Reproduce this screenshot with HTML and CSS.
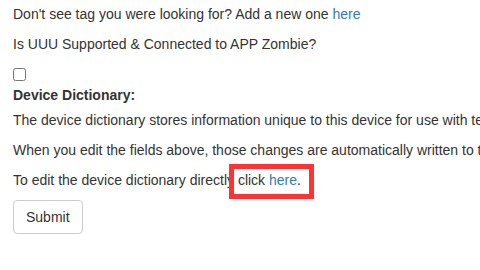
FILE: index.html
```html
<!DOCTYPE html>
<html>
<head>
<meta charset="utf-8">
<link rel="stylesheet" href="styles.css">
</head>
<body>
<div class="page">
  <p>Don't see tag you were looking for? Add a new one <a href="#">here</a></p>
  <p>Is UUU Supported &amp; Connected to APP Zombie?</p>
  <div class="check-row"><input type="checkbox" class="check"></div>
  <label class="label">Device Dictionary:</label>
  <p>The device dictionary stores information unique to this device for use with templates and other automation.</p>
  <p>When you edit the fields above, those changes are automatically written to the device dictionary.</p>
  <p>To edit the device dictionary directly <span class="highlight">click <a href="#">here</a>.</span></p>
  <button class="btn">Submit</button>
</div>
</body>
</html>
```

FILE: styles.css
```css
html, body {
  margin: 0;
  padding: 0;
  background: #fff;
  overflow: hidden;
}
body {
  font-family: "Liberation Sans", Arial, sans-serif;
  font-size: 14px;
  line-height: 20px;
  color: #333;
}
.page {
  padding: 4px 0 0 13px;
  white-space: nowrap;
}
p {
  margin: 0 0 10px;
}
a {
  color: #337ab7;
  text-decoration: none;
}
.check-row {
  padding: 4px 0 4px;
}
.check {
  display: block;
  width: 13px;
  height: 13px;
  margin: 0;
}
.label {
  display: inline-block;
  font-weight: bold;
  margin-bottom: 5px;
}
.highlight {
  position: relative;
}
.highlight::after {
  content: "";
  position: absolute;
  left: -9px;
  right: -13px;
  top: -8px;
  bottom: -11px;
  border: 5px solid #ff3333;
  pointer-events: none;
}
.btn {
  display: block;
  font-family: inherit;
  font-size: 14px;
  line-height: 20px;
  color: #333;
  background: #fff;
  border: 1px solid #ccc;
  border-radius: 4px;
  padding: 6px 12px;
  margin: 0;
}
```
